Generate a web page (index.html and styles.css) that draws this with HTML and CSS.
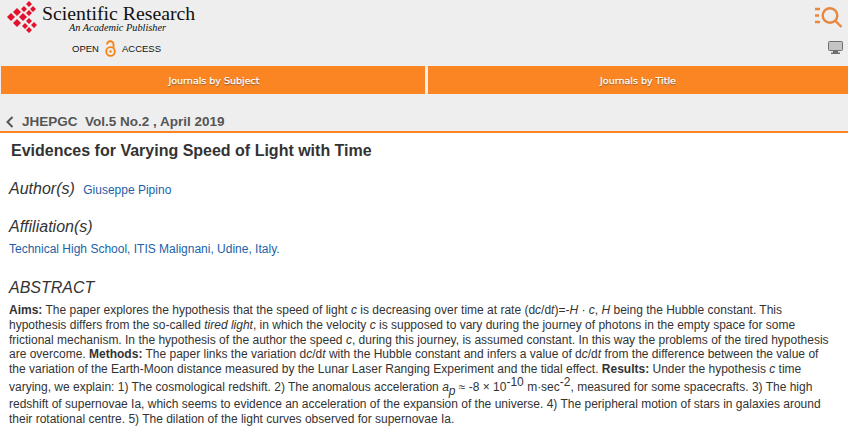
FILE: index.html
```html
<!DOCTYPE html>
<html lang="en">
<head>
    <meta charset="UTF-8">
    <meta name="viewport" content="width=device-width, initial-scale=1.0">
    <title>Evidences for Varying Speed of Light with Time</title>
    <link rel="stylesheet" href="styles.css">
</head>
<body>
    <header class="top">
        <div class="brand">
            <div class="logo-row">
                <svg class="logo" width="31" height="32" viewBox="0 -1 31 32" fill="#e3112c">
                    <path d="M22-1l3 3-3 3-3-3zM17 4l3 3-3 3-3-3zM26 4l3 3-3 3-3-3zM22 8l3 3-3 3-3-3zM10 6l4 4-4 4-4-4zM4 11l4 4-4 4-4-4zM16 11l4 4-4 4-4-4zM10 17l4 4-4 4-4-4zM22 16l3 3-3 3-3-3zM18 21l3 3-3 3-3-3zM27 20l3 3-3 3-3-3zM22 25l3 3-3 3-3-3z"/>
                </svg>
                <div class="brand-text">
                    <div class="brand-name">Scientific Research</div>
                    <div class="brand-sub">An Academic Publisher</div>
                </div>
            </div>
            <div class="open-access">
                <span>OPEN</span>
                <svg width="11" height="17" viewBox="0 0 11 17" fill="none" stroke="#f68212" stroke-width="1.800">
                    <circle cx="5.500" cy="11.500" r="4.300"/>
                    <circle cx="5.500" cy="11.500" r="1.200" fill="#f68212" stroke="none"/>
                    <path d="M2 4.500a3.200 3.200 0 0 1 6.500 0V8"/>
                </svg>
                <span>ACCESS</span>
            </div>
        </div>
        <div class="tools">
            <svg width="28" height="22" viewBox="0 0 28 22" fill="none" stroke="#e8873f" stroke-width="2.400">
                <circle cx="15" cy="9.500" r="7.300"/>
                <path d="M20.500 15l6 6"/>
                <path d="M0 3h5M0 9.500h4M0 16h5"/>
            </svg>
            <svg class="screen" width="15" height="13" viewBox="0 0 15 13">
                <rect x="0.500" y="0.500" width="14" height="9" rx="1" fill="#c4c4c4" stroke="#6e6e6e"/>
                <path d="M5 10h5v1.500h2V13H3v-1.500h2z" fill="#6e6e6e"/>
            </svg>
        </div>
    </header>

    <nav class="nav">
        <a href="#">Journals by Subject</a>
        <a href="#">Journals by Title</a>
    </nav>

    <div class="crumb">
        <svg width="8" height="12" viewBox="0 0 8 12" fill="none" stroke="#555" stroke-width="2"><path d="M6.500 1L1.500 6l5 5"/></svg>
        <span>JHEPGC&nbsp; Vol.5 No.2 , April 2019</span>
    </div>

    <main class="paper">
        <h1>Evidences for Varying Speed of Light with Time</h1>

        <h2 class="author-head">Author(s) <a class="author" href="#">Giuseppe Pipino</a></h2>

        <h2>Affiliation(s)</h2>
        <p class="affil"><a href="#">Technical High School, ITIS Malignani, Udine, Italy.</a></p>

        <h2>ABSTRACT</h2>
        <p class="abstract"><b>Aims:</b> The paper explores the hypothesis that the speed of light <i>c</i> is decreasing over time at rate (d<i>c</i>/d<i>t</i>)=-<i>H</i> &middot; <i>c</i>, <i>H</i> being the Hubble constant. This hypothesis differs from the so-called <i>tired light</i>, in which the velocity <i>c</i> is supposed to vary during the journey of photons in the empty space for some frictional mechanism. In the hypothesis of the author the speed <i>c</i>, during this journey, is assumed constant. In this way the problems of the tired hypothesis are overcome. <b>Methods:</b> The paper links the variation d<i>c</i>/d<i>t</i> with the Hubble constant and infers a value of d<i>c</i>/d<i>t</i> from the difference between the value of the variation of the Earth-Moon distance measured by the Lunar Laser Ranging Experiment and the tidal effect. <b>Results:</b> Under the hypothesis <i>c</i> time varying, we explain: 1) The cosmological redshift. 2) The anomalous acceleration <i>a<sub>p</sub></i> &asymp; -8 &times; 10<sup>-10</sup> m&middot;sec<sup>-2</sup>, measured for some spacecrafts. 3) The high redshift of supernovae Ia, which seems to evidence an acceleration of the expansion of the universe. 4) The peripheral motion of stars in galaxies around their rotational centre. 5) The dilation of the light curves observed for supernovae Ia.</p>
    </main>
</body>
</html>
```

FILE: styles.css
```css
body {
    margin: 0;
    font-family: "Liberation Sans", Arial, sans-serif;
    color: #333;
    background-color: white;
}

a {
    color: #1d5fa8;
    text-decoration: none;
}

.top {
    display: flex;
    justify-content: space-between;
    height: 66px;
    background-color: #eee;
    box-sizing: border-box;
    padding: 3px 6px 0 7px;
}

.logo-row {
    display: flex;
    gap: 4px;
    height: 30px;
}

.logo {
    margin-top: -2px;
}

.brand-name {
    font-family: "Liberation Serif", serif;
    font-size: 19.800px;
    line-height: 20px;
    color: #111;
}

.brand-sub {
    font-family: "Liberation Serif", serif;
    font-style: italic;
    font-size: 10.300px;
    line-height: 10px;
    margin-left: 27px;
    color: #111;
}

.open-access {
    display: flex;
    align-items: center;
    gap: 6px;
    margin: 7px 0 0 65px;
    font-size: 9.500px;
    color: #111;
}

.tools {
    display: flex;
    flex-direction: column;
    align-items: flex-end;
    gap: 13px;
    padding-top: 3px;
    margin-right: -1px;
}

.nav {
    display: flex;
    gap: 3px;
    height: 28px;
    background-color: #eee;
    padding-left: 1px;
}

.nav a {
    flex: 1;
    display: flex;
    align-items: center;
    justify-content: center;
    background-color: #fa8522;
    color: white;
    font-family: "DejaVu Sans", sans-serif;
    font-size: 9.500px;
    -webkit-text-stroke: 0.25px white;
    text-shadow: 0 1px 1px rgba(0, 0, 0, 0.55);
}

.nav a:first-child {
    flex: none;
    width: 424px;
    padding-left: 2px;
    box-sizing: border-box;
}

.crumb {
    display: flex;
    align-items: center;
    gap: 8px;
    height: 39px;
    box-sizing: border-box;
    padding: 18px 0 0 6px;
    background-color: #eee;
    border-bottom: 2px solid #fa8522;
    font-size: 13.500px;
    font-weight: bold;
    color: #555;
}

.paper {
    padding: 0 12px 0 9px;
}

h1 {
    font-size: 16px;
    margin: 8px 0 0 2px;
    line-height: 20px;
    color: #333;
}

h2 {
    font-size: 16px;
    font-weight: normal;
    font-style: italic;
    margin: 0;
    line-height: 20px;
    color: #333;
}

.author-head {
    margin: 18px 0 17px;
}

.author {
    font-size: 12px;
    font-style: normal;
    margin-left: 4px;
}

.affil {
    margin: 4px 0 21px;
    font-size: 12px;
    line-height: 16px;
}

.abstract {
    margin: 5px 0 0;
    font-size: 12px;
    line-height: 14.750px;
    color: #333;
}

sup {
    font-size: 12px;
    line-height: 10px;
    vertical-align: 5px;
}

sub {
    font-size: 12px;
    line-height: 12px;
    vertical-align: -4px;
}
```
